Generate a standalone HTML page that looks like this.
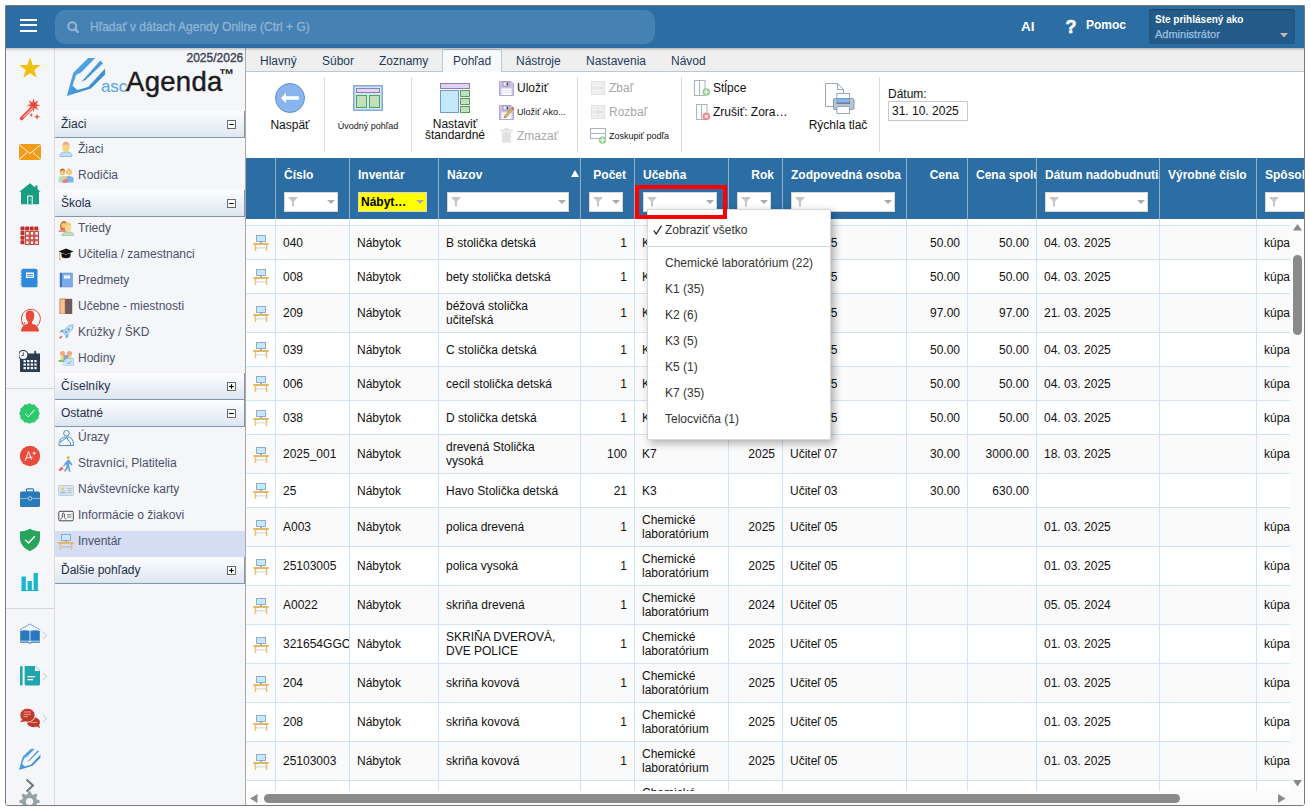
<!DOCTYPE html><html><head><meta charset="utf-8"><style>
*{box-sizing:border-box;margin:0;padding:0}
html,body{width:1310px;height:811px;overflow:hidden;background:#fff;font-family:"Liberation Sans",sans-serif;font-size:12px;color:#000}
.abs{position:absolute}
.frame{position:absolute;left:5px;top:5px;width:1300px;height:801px;border:1px solid #7a7a7a;overflow:hidden;background:#fff;border-radius:0 0 3px 3px}
.t{position:absolute;white-space:nowrap;line-height:14px}
</style></head><body>
<div class="frame">

<div class="abs" style="left:0px;top:0px;width:1298px;height:42px;background:#2c6da3"></div>
<div class="abs" style="left:14px;top:13px;width:17px;height:2px;background:#fff"></div>
<div class="abs" style="left:14px;top:18.4px;width:17px;height:2px;background:#fff"></div>
<div class="abs" style="left:14px;top:23.8px;width:17px;height:2px;background:#fff"></div>
<div class="abs" style="left:49px;top:4px;width:600px;height:34px;background:#4581b2;border-radius:10px"></div>
<svg class="abs" style="left:60px;top:14px" width="14" height="14" viewBox="0 0 14 14"><circle cx="6.2" cy="6.2" r="3.9" fill="none" stroke="#8fb4d5" stroke-width="2.1"/><path d="M9 9L11.8 11.8" stroke="#8fb4d5" stroke-width="2.5" stroke-linecap="round"/></svg>
<div class="t" style="left:84px;top:14px;color:#8eb3d4;font-size:12px;-webkit-text-stroke:0.35px #8eb3d4">Hľadať v dátach Agendy Online (Ctrl + G)</div>
<div class="t" style="left:1015px;top:13.5px;color:#fff;font-weight:bold;font-size:13.5px">AI</div>
<div class="t" style="left:1059.5px;top:13.5px;color:#fff;font-weight:bold;font-size:18px;-webkit-text-stroke:0.6px #fff">?</div>
<div class="t" style="left:1080px;top:12px;color:#fff;font-weight:bold;font-size:12px">Pomoc</div>
<div class="abs" style="left:1143px;top:3px;width:146px;height:35px;background:#245a88;border-radius:3px;box-shadow:inset 0 1px 1px rgba(0,0,0,0.25)"></div>
<div class="t" style="left:1149px;top:7px;color:#fff;font-weight:bold;font-size:10px">Ste prihlásený ako</div>
<div class="t" style="left:1149px;top:21px;color:#9cc0e4;font-size:11px;-webkit-text-stroke:0.25px #9cc0e4">Administrátor</div>
<svg class="abs" style="left:1274px;top:27px" width="8" height="5"><path d="M0 0h8L4 4.5z" fill="#c4beb8"/></svg>
<div class="abs" style="left:0px;top:42px;width:49px;height:757px;background:#f5f6f9;border-right:1px solid #dcdcdc"></div>
<div class="abs" style="left:0px;top:382px;width:48px;height:1px;background:#d6d6d6"></div>
<div class="abs" style="left:0px;top:602px;width:48px;height:1px;background:#d6d6d6"></div>
<div class="abs" style="left:49px;top:42px;width:191px;height:757px;background:#f5f6f9;border-right:1px solid #a8a8a8"></div>
<div class="t" style="left:180.5px;top:45px;color:#3d4556;font-size:12px;-webkit-text-stroke:0.4px #3d4556">2025/2026</div>
<div class="abs" style="left:49px;top:105px;width:190px;height:27px;background:linear-gradient(#fdfdfe,#dde6f1);border-bottom:1px solid #8595ac;border-right:1px solid #8a94a4"></div>
<div class="t" style="left:55px;top:111px;color:#1e2e4a;font-size:12px">Žiaci</div>
<svg class="abs" style="left:221px;top:114px" width="9" height="9" viewBox="0 0 9 9"><rect x="0.5" y="0.5" width="8" height="8" fill="#fff" stroke="#6a6a6a"/><path d="M2.2 4.5H6.8" stroke="#000" stroke-width="1.2"/></svg>
<div class="t" style="left:72px;top:136px;color:#4b5068;font-size:12px">Žiaci</div>
<div class="t" style="left:72px;top:162px;color:#4b5068;font-size:12px">Rodičia</div>
<div class="abs" style="left:49px;top:184px;width:190px;height:27px;background:linear-gradient(#fdfdfe,#dde6f1);border-bottom:1px solid #8595ac;border-right:1px solid #8a94a4"></div>
<div class="t" style="left:55px;top:190px;color:#1e2e4a;font-size:12px">Škola</div>
<svg class="abs" style="left:221px;top:193px" width="9" height="9" viewBox="0 0 9 9"><rect x="0.5" y="0.5" width="8" height="8" fill="#fff" stroke="#6a6a6a"/><path d="M2.2 4.5H6.8" stroke="#000" stroke-width="1.2"/></svg>
<div class="t" style="left:72px;top:215px;color:#4b5068;font-size:12px">Triedy</div>
<div class="t" style="left:72px;top:241px;color:#4b5068;font-size:12px">Učitelia / zamestnanci</div>
<div class="t" style="left:72px;top:267px;color:#4b5068;font-size:12px">Predmety</div>
<div class="t" style="left:72px;top:293px;color:#4b5068;font-size:12px">Učebne - miestnosti</div>
<div class="t" style="left:72px;top:319px;color:#4b5068;font-size:12px">Krúžky / ŠKD</div>
<div class="t" style="left:72px;top:345px;color:#4b5068;font-size:12px">Hodiny</div>
<div class="abs" style="left:49px;top:367px;width:190px;height:27px;background:linear-gradient(#fdfdfe,#dde6f1);border-bottom:1px solid #8595ac;border-right:1px solid #8a94a4"></div>
<div class="t" style="left:55px;top:373px;color:#1e2e4a;font-size:12px">Číselníky</div>
<svg class="abs" style="left:221px;top:376px" width="9" height="9" viewBox="0 0 9 9"><rect x="0.5" y="0.5" width="8" height="8" fill="#fff" stroke="#6a6a6a"/><path d="M2.2 4.5H6.8" stroke="#000" stroke-width="1.2"/><path d="M4.5 2.2V6.8" stroke="#000" stroke-width="1.2"/></svg>
<div class="abs" style="left:49px;top:394px;width:190px;height:27px;background:linear-gradient(#fdfdfe,#dde6f1);border-bottom:1px solid #8595ac;border-right:1px solid #8a94a4"></div>
<div class="t" style="left:55px;top:400px;color:#1e2e4a;font-size:12px">Ostatné</div>
<svg class="abs" style="left:221px;top:403px" width="9" height="9" viewBox="0 0 9 9"><rect x="0.5" y="0.5" width="8" height="8" fill="#fff" stroke="#6a6a6a"/><path d="M2.2 4.5H6.8" stroke="#000" stroke-width="1.2"/></svg>
<div class="t" style="left:72px;top:424px;color:#4b5068;font-size:12px">Úrazy</div>
<div class="t" style="left:72px;top:450px;color:#4b5068;font-size:12px">Stravníci, Platitelia</div>
<div class="t" style="left:72px;top:476px;color:#4b5068;font-size:12px">Návštevnícke karty</div>
<div class="t" style="left:72px;top:502px;color:#4b5068;font-size:12px">Informácie o žiakovi</div>
<div class="abs" style="left:49px;top:525px;width:190px;height:26px;background:#d5ddf4"></div>
<div class="t" style="left:72px;top:528px;color:#4b5068;font-size:12px">Inventár</div>
<div class="abs" style="left:49px;top:551px;width:190px;height:27px;background:linear-gradient(#fdfdfe,#dde6f1);border-bottom:1px solid #8595ac;border-right:1px solid #8a94a4"></div>
<div class="t" style="left:55px;top:557px;color:#1e2e4a;font-size:12px">Ďalšie pohľady</div>
<svg class="abs" style="left:221px;top:560px" width="9" height="9" viewBox="0 0 9 9"><rect x="0.5" y="0.5" width="8" height="8" fill="#fff" stroke="#6a6a6a"/><path d="M2.2 4.5H6.8" stroke="#000" stroke-width="1.2"/><path d="M4.5 2.2V6.8" stroke="#000" stroke-width="1.2"/></svg>
<svg class="abs" style="left:12px;top:50px" width="24" height="24" viewBox="0 0 24 24"><path d="M12.00,1.30L14.70,8.88L22.75,9.11L16.37,14.02L18.64,21.74L12.00,17.20L5.36,21.74L7.63,14.02L1.25,9.11L9.30,8.88Z" fill="#f2c011"/></svg>
<svg class="abs" style="left:12px;top:90px" width="24" height="26" viewBox="0 0 24 26"><path d="M3.5 22.5L15.5 10.5" stroke="#e64a3b" stroke-width="3.2" stroke-linecap="round"/><path d="M22.50,9.30L18.27,10.45L20.45,14.25L16.65,12.07L15.50,16.30L14.35,12.07L10.55,14.25L12.73,10.45L8.50,9.30L12.73,8.15L10.55,4.35L14.35,6.53L15.50,2.30L16.65,6.53L20.45,4.35L18.27,8.15Z" fill="#e64a3b"/><path d="M15 11.5L5 21.5" stroke="#fff" stroke-width="0.9"/><path d="M15.50,19.00L13.87,19.57L13.30,21.20L12.73,19.57L11.10,19.00L12.73,18.43L13.30,16.80L13.87,18.43Z" fill="#e64a3b"/><path d="M22.20,20.80L19.78,21.58L19.00,24.00L18.22,21.58L15.80,20.80L18.22,20.02L19.00,17.60L19.78,20.02Z" fill="#e64a3b"/></svg>
<svg class="abs" style="left:12px;top:137px" width="24" height="18" viewBox="0 0 24 18"><rect x="1" y="1" width="22" height="16" fill="#f39c1a"/><path d="M1 1.5L12 10.5L23 1.5M1 16.5L9 9.5M23 16.5L15 9.5" fill="none" stroke="#fff" stroke-width="0.9"/></svg>
<svg class="abs" style="left:12px;top:176px" width="24" height="24" viewBox="0 0 24 24"><path d="M12 1.3L1.3 9.8H3V22.3H21V9.8H22.7L19.5 7.2V3.5H17.2V5.4Z" fill="#1a9e82"/><rect x="9.3" y="13.5" width="5.4" height="8.8" fill="#fff"/><rect x="10.3" y="14.5" width="3.4" height="7.8" fill="#1a9e82"/><rect x="12.3" y="17.6" width="0.8" height="0.8" fill="#fff"/></svg>
<svg class="abs" style="left:14px;top:220px" width="20" height="20" viewBox="0 0 20 20"><rect x="0.5" y="0.5" width="4" height="4" rx="0.6" fill="#c0302a"/><rect x="5.1" y="0.5" width="4" height="4" rx="0.6" fill="#c0302a"/><rect x="9.7" y="0.5" width="4" height="4" rx="0.6" fill="#c0302a"/><rect x="14.299999999999999" y="0.5" width="4" height="4" rx="0.6" fill="#c0302a"/><rect x="0.5" y="5.1" width="4" height="4" rx="0.6" fill="#c0302a"/><rect x="5.1" y="5.1" width="4.6" height="4.6" fill="#c0302a"/><rect x="6.1" y="6.1" width="2.6" height="2.6" fill="#fff"/><rect x="9.7" y="5.1" width="4.6" height="4.6" fill="#c0302a"/><rect x="10.7" y="6.1" width="2.6" height="2.6" fill="#fff"/><rect x="14.299999999999999" y="5.1" width="4.6" height="4.6" fill="#c0302a"/><rect x="15.299999999999999" y="6.1" width="2.6" height="2.6" fill="#fff"/><rect x="0.5" y="9.7" width="4" height="4" rx="0.6" fill="#c0302a"/><rect x="5.1" y="9.7" width="4.6" height="4.6" fill="#c0302a"/><rect x="6.1" y="10.7" width="2.6" height="2.6" fill="#fff"/><rect x="9.7" y="9.7" width="4.6" height="4.6" fill="#c0302a"/><rect x="10.7" y="10.7" width="2.6" height="2.6" fill="#fff"/><rect x="14.299999999999999" y="9.7" width="4.6" height="4.6" fill="#c0302a"/><rect x="15.299999999999999" y="10.7" width="2.6" height="2.6" fill="#fff"/><rect x="0.5" y="14.299999999999999" width="4" height="4" rx="0.6" fill="#c0302a"/><rect x="5.1" y="14.299999999999999" width="4.6" height="4.6" fill="#c0302a"/><rect x="6.1" y="15.299999999999999" width="2.6" height="2.6" fill="#fff"/><rect x="9.7" y="14.299999999999999" width="4.6" height="4.6" fill="#c0302a"/><rect x="10.7" y="15.299999999999999" width="2.6" height="2.6" fill="#fff"/><rect x="14.299999999999999" y="14.299999999999999" width="4.6" height="4.6" fill="#c0302a"/><rect x="15.299999999999999" y="15.299999999999999" width="2.6" height="2.6" fill="#fff"/></svg>
<svg class="abs" style="left:14px;top:262px" width="18" height="20" viewBox="0 0 18 20"><rect x="1.5" y="0.7" width="16" height="18.6" rx="1.6" fill="#2e8ad8"/><rect x="6" y="4.5" width="8" height="5.5" fill="#fff"/><rect x="7" y="6" width="6" height="0.9" fill="#2e8ad8"/><rect x="7" y="7.8" width="6" height="0.9" fill="#2e8ad8"/><path d="M0.5 4H2.5M0.5 7H2.5M0.5 10H2.5M0.5 13H2.5M0.5 16H2.5" stroke="#2e8ad8" stroke-width="1"/></svg>
<svg class="abs" style="left:13px;top:302px" width="22" height="24" viewBox="0 0 22 24"><path d="M11 2.5C7.5 2.5 6.5 5.5 6.8 8.5C7 11 8 13 9 14V15.5C6 16.5 2.5 18 2 23.5H20C19.5 18 16 16.5 13 15.5V14C14 13 15 11 15.2 8.5C15.5 5.5 14.5 2.5 11 2.5Z" fill="#e64a3b"/><path d="M4 16A9.5 9.5 0 1 1 18 18" fill="none" stroke="#e64a3b" stroke-width="1"/><path d="M2 14.5L4.5 17.5L6 14" fill="none" stroke="#e64a3b" stroke-width="1"/></svg>
<svg class="abs" style="left:13px;top:344px" width="22" height="22" viewBox="0 0 22 22"><rect x="1" y="3.5" width="20" height="18.5" fill="#2b3c50"/><rect x="15.3" y="0.8" width="1.8" height="4.5" fill="#2b3c50"/><rect x="9" y="5" width="12" height="2" fill="#2b3c50" stroke="#f5f6f9" stroke-width="0"/><g fill="#fff"><rect x="4.5" y="10.0" width="2.3" height="2.2"/><rect x="8.1" y="10.0" width="2.3" height="2.2"/><rect x="11.7" y="10.0" width="2.3" height="2.2"/><rect x="15.3" y="10.0" width="2.3" height="2.2"/><rect x="4.5" y="13.5" width="2.3" height="2.2"/><rect x="8.1" y="13.5" width="2.3" height="2.2"/><rect x="11.7" y="13.5" width="2.3" height="2.2"/><rect x="15.3" y="13.5" width="2.3" height="2.2"/><rect x="4.5" y="17.0" width="2.3" height="2.2"/><rect x="8.1" y="17.0" width="2.3" height="2.2"/><rect x="11.7" y="17.0" width="2.3" height="2.2"/><rect x="15.3" y="17.0" width="2.3" height="2.2"/></g><circle cx="4.3" cy="5" r="4.6" fill="#f5f6f9" stroke="#2b3c50" stroke-width="1.1"/><path d="M4.3 2.4V5.5H2.6" fill="none" stroke="#2b3c50" stroke-width="0.9"/></svg>
<svg class="abs" style="left:13px;top:397px" width="22" height="22" viewBox="0 0 22 22"><path d="M20.80,10.50L19.58,12.93L19.42,15.65L17.15,17.15L15.65,19.42L12.93,19.58L10.50,20.80L8.07,19.58L5.35,19.42L3.85,17.15L1.58,15.65L1.42,12.93L0.20,10.50L1.42,8.07L1.58,5.35L3.85,3.85L5.35,1.58L8.07,1.42L10.50,0.20L12.93,1.42L15.65,1.58L17.15,3.85L19.42,5.35L19.58,8.07Z" fill="#2dca6c"/><path d="M6.2 11L9.4 13.8L15.5 6.8" fill="none" stroke="#fff" stroke-width="1"/></svg>
<svg class="abs" style="left:13px;top:439px" width="22" height="22" viewBox="0 0 22 22"><circle cx="11" cy="11" r="10.2" fill="#e74c3c"/><path d="M6 16L9.5 6.5L12.5 14.5M6.8 13.5Q9.5 11.8 13.5 12.2M13.6 8.2H16.8M15.2 6.6V9.8" fill="none" stroke="#fff" stroke-width="0.9"/></svg>
<svg class="abs" style="left:13px;top:482px" width="22" height="20" viewBox="0 0 22 20"><rect x="1" y="3.5" width="20" height="15.5" rx="1.5" fill="#2a7ab8"/><rect x="7.5" y="0.8" width="7" height="3.2" rx="1" fill="none" stroke="#2a7ab8" stroke-width="1.2"/><rect x="1" y="10" width="20" height="1" fill="#8ab8dc"/><circle cx="11" cy="10.5" r="1.8" fill="#2a7ab8" stroke="#b8d4ec" stroke-width="0.9"/></svg>
<svg class="abs" style="left:13px;top:522px" width="22" height="24" viewBox="0 0 22 24"><path d="M11 0.8C7.5 2.8 4.5 3.3 1 3.3V10C1 16 5 20.5 11 23.2C17 20.5 21 16 21 10V3.3C17.5 3.3 14.5 2.8 11 0.8Z" fill="#27a55a"/><path d="M6.2 11.8L9.5 15L15.8 8.2" fill="none" stroke="#fff" stroke-width="1.3"/></svg>
<svg class="abs" style="left:14px;top:566px" width="20" height="20" viewBox="0 0 20 20"><rect x="1.5" y="4.5" width="4.3" height="13.5" fill="#19b6cf"/><rect x="7.6" y="9" width="4.3" height="9" fill="#19b6cf"/><rect x="13.6" y="1" width="4.3" height="17" fill="#19b6cf"/><rect x="1" y="18" width="17.5" height="1" fill="#19b6cf"/></svg>
<svg class="abs" style="left:13px;top:617px" width="23" height="22" viewBox="0 0 23 22"><path d="M0.8 6.8L11 1L21.3 6.8" fill="none" stroke="#2a78be" stroke-width="0.9" stroke-dasharray="1.3 0.6"/><path d="M1.2 7.8Q6 6.6 10.6 7.8V17.8H1.2Z" fill="#2a78be"/><path d="M11.4 7.8Q16 6.6 20.8 7.8V17.8H11.4Z" fill="#2a78be"/><rect x="10.6" y="7.8" width="0.8" height="10.5" fill="#8ab8e0"/><path d="M1 18.6H9.5L11 20L12.5 18.6H21V19.8H12.5L11 21L9.5 19.8H1Z" fill="#2a78be"/></svg>
<svg class="abs" style="left:13px;top:659px" width="22" height="22" viewBox="0 0 22 22"><rect x="1" y="1" width="2.6" height="19.5" rx="1.3" fill="#22a6ae"/><path d="M5.6 1H16L21 6V19C21 19.8 20.3 20.5 19.5 20.5H7C6.2 20.5 5.6 19.8 5.6 19Z" fill="#22a6ae"/><path d="M16 1.5V6H20.5Z" fill="#fff"/><rect x="8.5" y="11" width="7.5" height="1.3" fill="#fff"/><rect x="8.5" y="14" width="5.5" height="1.3" fill="#fff"/></svg>
<svg class="abs" style="left:13px;top:701px" width="23" height="23" viewBox="0 0 23 23"><ellipse cx="14.5" cy="15.3" rx="6.5" ry="5" fill="#c0392b"/><path d="M17 19L21.2 21.2L19.5 17Z" fill="#c0392b"/><path d="M12 15.5H18" stroke="#e89088" stroke-width="1"/><ellipse cx="8.5" cy="8.2" rx="7.6" ry="7" fill="#c0392b" stroke="#f5f6f9" stroke-width="0.9"/><path d="M3.5 12.5L0.8 15.2L6.5 14.2Z" fill="#c0392b"/><path d="M4.5 5H12M4.5 7.4H12M4.5 9.6H9" stroke="#f0a098" stroke-width="1"/></svg>
<svg class="abs" style="left:36px;top:625px" width="6" height="9" viewBox="0 0 6 9"><path d="M0.8 0.8L4.6 4.5L0.8 8.2" fill="none" stroke="#d4d4d4" stroke-width="1.1"/></svg>
<svg class="abs" style="left:36px;top:666px" width="6" height="9" viewBox="0 0 6 9"><path d="M0.8 0.8L4.6 4.5L0.8 8.2" fill="none" stroke="#d4d4d4" stroke-width="1.1"/></svg>
<svg class="abs" style="left:36px;top:708px" width="6" height="9" viewBox="0 0 6 9"><path d="M0.8 0.8L4.6 4.5L0.8 8.2" fill="none" stroke="#d4d4d4" stroke-width="1.1"/></svg>
<svg class="abs" style="left:10px;top:740px" width="26" height="26" viewBox="0 0 26 26"><defs><linearGradient id="lg2" x1="0" y1="0" x2="1" y2="1"><stop offset="0" stop-color="#62b4ea"/><stop offset="1" stop-color="#2a7fcc"/></linearGradient></defs><g transform="translate(0.3,0.4) scale(0.56)"><path d="M4.8 42L11.3 18.7L26.1 4H33.2L19.3 18.2L14.2 21L10.5 31.5L15.3 36L26.1 32.9L43.1 14.5V20.4L28.9 34.6Z" fill="url(#lg2)"/><path d="M19.3 27.7L38.6 6.8L40.6 9L23.5 25.5Z" fill="url(#lg2)"/></g></svg>
<svg class="abs" style="left:19px;top:772px" width="10" height="15" viewBox="0 0 10 15"><path d="M1.5 1.5L8 7.5L1.5 13.5" fill="none" stroke="#6b7682" stroke-width="2"/></svg>
<svg class="abs" style="left:13px;top:785px" width="22" height="21" viewBox="0 0 22 21"><path d="M20.65,9.50L20.65,11.50L17.68,12.68L17.11,14.04L18.38,16.97L16.97,18.39L14.03,17.12L12.67,17.68L11.50,20.65L9.50,20.65L8.32,17.68L6.96,17.11L4.03,18.38L2.61,16.97L3.88,14.03L3.32,12.67L0.35,11.50L0.35,9.50L3.32,8.32L3.89,6.96L2.62,4.03L4.03,2.61L6.97,3.88L8.33,3.32L9.50,0.35L11.50,0.35L12.68,3.32L14.04,3.89L16.97,2.62L18.39,4.03L17.12,6.97L17.68,8.33Z" fill="#94a3a4"/><circle cx="10.5" cy="10.5" r="3.6" fill="#f5f6f9"/></svg>
<svg class="abs" style="left:52px;top:135px" width="16" height="16" viewBox="0 0 16 16"><path d="M2 15.5C2 12 4 11 8 11S14 12 14 15.5Z" fill="#bde0f8" stroke="#8ab4d8" stroke-width="0.8"/><ellipse cx="8" cy="6.5" rx="3.5" ry="4.5" fill="#f4d67a"/><path d="M4.5 5.5C4.5 2 6 0.8 8 0.8S11.5 2 11.5 5.5C11 4 10 3.5 8 3.5S5 4 4.5 5.5Z" fill="#f0a585"/></svg>
<svg class="abs" style="left:52px;top:161px" width="16" height="16" viewBox="0 0 16 16"><path d="M0.5 15.5V11.5C0.5 10 2 9 5 9S9 10 9 11.5V15.5Z" fill="#b8e0b8"/><circle cx="4.5" cy="5.5" r="2.8" fill="#f2c878"/><path d="M1.8 5C1.8 2.5 3 1.5 4.5 1.5S7.2 2.5 7.2 5C6.5 3.8 5.5 3.5 4.5 3.5S2.5 3.8 1.8 5Z" fill="#b8703a"/><path d="M7 15.5V11.5C7 10 8.5 9 11 9S15.5 10 15.5 11.5V15.5Z" fill="#80b4ec"/><circle cx="11" cy="5.5" r="2.8" fill="#f2d08a"/><path d="M8 6C8 2.5 9.5 1.5 11 1.5S14 2.5 14 6L13.5 8C13 5 12 3.8 11 3.8S9 5 8.5 8Z" fill="#f0c870"/><path d="M4.5 15.8V13.8C4.5 13 5.5 12.5 7 12.5S9.5 13 9.5 13.8V15.8Z" fill="#ec7880"/><circle cx="7" cy="10.8" r="1.7" fill="#f2c878"/></svg>
<svg class="abs" style="left:52px;top:214px" width="16" height="16" viewBox="0 0 16 16"><path d="M0.5 12C0.5 10.5 2 9.5 5 9.5S9 10.5 9 12Z" fill="#ec8c98"/><path d="M2 8C2 3 3.5 1 6 1S9 3 9 6L7 10H3Z" fill="#d07a38"/><circle cx="5.8" cy="5.5" r="2.5" fill="#f4c878"/><path d="M4 16C4 13 6 12 10 12S16 13 16 16Z" fill="#bfe2bd" stroke="#8cc08a" stroke-width="0.6"/><ellipse cx="10" cy="8" rx="3.2" ry="3.8" fill="#f8d890"/><path d="M6.8 7C6.8 3.5 8 2.5 10 2.5S13.2 3.5 13.2 7C12.5 5.5 11.5 5 10 5S7.5 5.5 6.8 7Z" fill="#f0c870"/></svg>
<svg class="abs" style="left:52px;top:240px" width="16" height="16" viewBox="0 0 16 16"><path d="M0.5 5.5L8 2.5L15.5 5.5L8 8.5Z" fill="#111"/><path d="M3.5 7V10C3.5 11.5 5.5 12.2 8 12.2S12.5 11.5 12.5 10V7L8 8.8Z" fill="#111"/><path d="M1.8 6V12.5" stroke="#d8a068" stroke-width="0.9"/><rect x="1.2" y="12" width="1.3" height="2.5" fill="#e8a878"/></svg>
<svg class="abs" style="left:52px;top:266px" width="16" height="16" viewBox="0 0 16 16"><rect x="2" y="1" width="12.5" height="14" fill="#7aaae8" stroke="#5a8ad0" stroke-width="0.5"/><rect x="2" y="1" width="2" height="14" fill="#3a70c0"/><rect x="6" y="3.5" width="6" height="3" fill="#fff"/><rect x="7" y="4.5" width="4" height="1" fill="#dde"/></svg>
<svg class="abs" style="left:52px;top:292px" width="16" height="16" viewBox="0 0 16 16"><rect x="2" y="1" width="12" height="15" fill="#5a4a50" stroke="#b07850" stroke-width="0.6"/><rect x="7.5" y="1.5" width="6" height="14" fill="#6e5c62"/><path d="M2 1.3L7 0.8V16H2Z" fill="#f8c090" stroke="#c08050" stroke-width="0.6"/></svg>
<svg class="abs" style="left:52px;top:318px" width="16" height="16" viewBox="0 0 16 16"><path d="M15 0.8L11 1.5L4.5 8L8 11.5L14.5 5Z" fill="#c0e4fa" stroke="#6fa0d8" stroke-width="0.7"/><path d="M4.5 8L1.5 8.5L3 6L6 5.5Z" fill="#6fa0d8"/><path d="M8 11.5L7.5 14.5L10 13L10.5 10Z" fill="#6fa0d8"/><circle cx="10.5" cy="5.5" r="1.2" fill="#6fa0d8"/><circle cx="8" cy="8" r="1.2" fill="#6fa0d8"/><path d="M1 14L3.5 11.5L4.5 12.5L2 15Z" fill="#ec5858"/></svg>
<svg class="abs" style="left:52px;top:344px" width="16" height="16" viewBox="0 0 16 16"><circle cx="4.5" cy="3.5" r="2.5" fill="#f0a878"/><circle cx="11.5" cy="3.5" r="2.5" fill="#f0a878"/><path d="M2.5 5.5H6.5V11H2.5Z" fill="#f4d67a"/><path d="M9.5 5.5H13.5V11H9.5Z" fill="#f4d67a"/><rect x="5.5" y="5" width="5" height="5" fill="#8aa8c8"/><rect x="0.5" y="10" width="6" height="2" fill="#80c080"/><rect x="7.5" y="8.5" width="8" height="7.5" fill="#c6e6fa" stroke="#90b8e0" stroke-width="0.5"/><path d="M9.5 12.5L11 13.8L13.5 11" fill="none" stroke="#5a8ad0" stroke-width="0.7"/><rect x="4" y="12.5" width="4" height="3" fill="#c6e6fa"/></svg>
<svg class="abs" style="left:52px;top:424px" width="16" height="16" viewBox="0 0 16 16"><circle cx="8.5" cy="3.2" r="2.8" fill="none" stroke="#4a8ec8" stroke-width="1"/><path d="M1 15.5C1 9.5 3.5 7 8.5 7S15.5 9.5 15.5 15.5Z" fill="none" stroke="#4a8ec8" stroke-width="1"/><path d="M2 12L9 7.5L10 10L12.5 12.5V15.5" fill="none" stroke="#4a8ec8" stroke-width="1"/><path d="M1.5 13.5L4 11" stroke="#9ac0e0" stroke-width="1.5"/></svg>
<svg class="abs" style="left:52px;top:450px" width="16" height="16" viewBox="0 0 16 16"><circle cx="10.3" cy="1.8" r="1.6" fill="#e8b050"/><path d="M9.5 4L6.5 7.5L5 10L6 10.5L8 8L8.5 11L6 15L7.5 15.8L10 12L11 15.8H12.5L11.5 11L11 7.5L13.5 9.5L14.5 8.5L11.5 4Z" fill="#6aa0e0"/><path d="M0.5 13.5L4 10.5L5.5 12.5L2 15.5Z" fill="#ec6a78"/></svg>
<svg class="abs" style="left:52px;top:476px" width="16" height="16" viewBox="0 0 16 16"><rect x="0.5" y="3.5" width="15" height="10" rx="1" fill="#d8e4f0" stroke="#b8c8d8" stroke-width="0.8"/><circle cx="4.8" cy="6.8" r="1.5" fill="#f2c848"/><path d="M2 11.5C2 9.8 3.2 9.2 4.8 9.2S7.6 9.8 7.6 11.5Z" fill="#90c4f0"/><path d="M9.5 6.5H13.5M9.5 8.5H13.5M9.5 10.5H13.5" stroke="#b0bcc8" stroke-width="0.9"/></svg>
<svg class="abs" style="left:52px;top:502px" width="16" height="16" viewBox="0 0 16 16"><rect x="0.8" y="3.3" width="14.5" height="9.5" rx="1.2" fill="#fff" stroke="#444" stroke-width="1"/><path d="M2.5 11.5C3 10 4 9.8 4.3 9.5V6.2C4.3 5.5 4.8 5 5.3 5S6.3 5.5 6.3 6.2V9.5C6.6 9.8 7.6 10 8 11.5" fill="none" stroke="#333" stroke-width="0.9"/><path d="M9 6.8H13.5M9 9H13.5" stroke="#666" stroke-width="1"/></svg>
<svg class="abs" style="left:52px;top:528px" width="16" height="16" viewBox="0 0 16 16"><rect x="3.5" y="0.5" width="9" height="6" fill="#c4e8fc" stroke="#94abc2" stroke-width="1"/><rect x="7" y="6.5" width="2" height="1.5" fill="#94abc2"/><rect x="0.3" y="8" width="15.4" height="2" rx="0.5" fill="#e2b866"/><rect x="1.7" y="10" width="1.5" height="6" fill="#ebc274"/><rect x="12.8" y="10" width="1.5" height="6" fill="#ebc274"/><rect x="3.2" y="12" width="9.6" height="1.6" fill="rgba(140,130,110,0.22)"/></svg>
<div class="abs" style="left:240px;top:42px;width:1058px;height:24px;background:#efefef;border-bottom:1px solid #b8c8da"></div>
<div class="abs" style="left:436px;top:43px;width:60px;height:23px;background:#f8f9fd;border:1px solid #b8c8da;border-bottom:none;border-radius:2px 2px 0 0"></div>
<div class="t" style="left:254px;top:48px;color:#1e3a5c;font-size:12px">Hlavný</div>
<div class="t" style="left:316px;top:48px;color:#1e3a5c;font-size:12px">Súbor</div>
<div class="t" style="left:373px;top:48px;color:#1e3a5c;font-size:12px">Zoznamy</div>
<div class="t" style="left:447px;top:48px;color:#1e3a5c;font-size:12px">Pohľad</div>
<div class="t" style="left:510px;top:48px;color:#1e3a5c;font-size:12px">Nástroje</div>
<div class="t" style="left:580px;top:48px;color:#1e3a5c;font-size:12px">Nastavenia</div>
<div class="t" style="left:665px;top:48px;color:#1e3a5c;font-size:12px">Návod</div>
<div class="abs" style="left:0px;top:42px;width:1298px;height:3px;background:linear-gradient(rgba(0,0,0,0.22),rgba(0,0,0,0))"></div>
<div class="abs" style="left:240px;top:66px;width:1058px;height:86px;background:#fff"></div>
<div class="abs" style="left:318px;top:71px;width:1px;height:75px;background:#dcdcdc"></div>
<div class="abs" style="left:405px;top:71px;width:1px;height:75px;background:#dcdcdc"></div>
<div class="abs" style="left:571px;top:71px;width:1px;height:75px;background:#dcdcdc"></div>
<div class="abs" style="left:675px;top:71px;width:1px;height:75px;background:#dcdcdc"></div>
<div class="abs" style="left:873px;top:71px;width:1px;height:75px;background:#dcdcdc"></div>
<svg class="abs" style="left:269px;top:77px" width="30" height="30" viewBox="0 0 30 30"><circle cx="15" cy="15" r="14.5" fill="#8ab4ee" stroke="#5f8ccc" stroke-width="1"/><path d="M6 15L11 9.8V13.3H23.8V16.8H11V20.2Z" fill="#fff"/></svg>
<div class="t" style="left:184px;width:200px;text-align:center;top:112px;color:#111">Naspäť</div>
<svg class="abs" style="left:347px;top:79px" width="30" height="26" viewBox="0 0 30 26"><rect x="0.75" y="0.75" width="28.5" height="24.5" fill="#c8ecfc" stroke="#88a8d8" stroke-width="1.5"/><rect x="3.5" y="3.5" width="23" height="4" fill="#e0d8f6" stroke="#9a78a8" stroke-width="1"/><rect x="3.5" y="10.5" width="10" height="12" fill="#bfe0bc" stroke="#5c9c5c" stroke-width="1"/><rect x="16.5" y="10.5" width="10" height="12" fill="#bfe0bc" stroke="#5c9c5c" stroke-width="1"/></svg>
<div class="t" style="left:262px;width:200px;text-align:center;top:113px;color:#111;font-size:9px">Úvodný pohľad</div>
<svg class="abs" style="left:434px;top:77px" width="30" height="30" viewBox="0 0 30 30"><rect x="0.5" y="0.5" width="29" height="5" fill="#dcd4f4" stroke="#9a78a8" stroke-width="1"/><rect x="0.5" y="7.5" width="18" height="22" fill="#c6e8fc" stroke="#6f9bd0" stroke-width="1"/><rect x="20.5" y="7.5" width="9" height="6" fill="#bfe0bc" stroke="#5c9c5c" stroke-width="1"/><rect x="20.5" y="15.5" width="9" height="6" fill="#bfe0bc" stroke="#5c9c5c" stroke-width="1"/><rect x="20.5" y="23.5" width="9" height="6" fill="#bfe0bc" stroke="#5c9c5c" stroke-width="1"/></svg>
<div class="t" style="left:399px;width:100px;text-align:center;top:113px;line-height:11px;color:#111">Nastaviť<br>štandardné</div>
<svg class="abs" style="left:493px;top:75px" width="15" height="15" viewBox="0 0 15 15"><path d="M0.5 0.5H12L14.5 3V14.5H0.5Z" fill="#cdbfe8" stroke="#b5a5d8" stroke-width="1"/><rect x="4" y="1" width="6" height="4" fill="#f0f0f4" stroke="#8890a0" stroke-width="0.8"/><rect x="7.5" y="1.8" width="1.5" height="2.5" fill="#444"/><rect x="2.5" y="7.5" width="10" height="6.5" fill="#fff"/><path d="M3.5 9.5H11.5M3.5 11.5H11.5" stroke="#cfe0f0" stroke-width="0.8"/></svg>
<div class="t" style="left:511px;top:75px;color:#111">Uložiť</div>
<svg class="abs" style="left:493px;top:99px" width="15" height="15" viewBox="0 0 15 15"><path d="M0.5 0.5H12L14.5 3V14.5H0.5Z" fill="#cdbfe8" stroke="#b5a5d8" stroke-width="1"/><rect x="4" y="1" width="6" height="4" fill="#f0f0f4" stroke="#8890a0" stroke-width="0.8"/><rect x="7.5" y="1.8" width="1.5" height="2.5" fill="#444"/><rect x="2.5" y="7.5" width="10" height="6.5" fill="#fff"/><path d="M3.5 9.5H11.5M3.5 11.5H11.5" stroke="#cfe0f0" stroke-width="0.8"/><path d="M5 13L6 10.5L12.5 3L14 4.5L7.5 12Z" fill="#e8c060" stroke="#8a6a30" stroke-width="0.6"/><path d="M12.5 3L14 4.5L15 3.5L13.5 2Z" fill="#e05050"/></svg>
<div class="t" style="left:511px;top:99px;color:#111;font-size:9px">Uložiť Ako...</div>
<svg class="abs" style="left:494px;top:122px" width="13" height="15" viewBox="0 0 13 15"><rect x="0" y="1.5" width="13" height="2" fill="#e2e2e2"/><rect x="4.5" y="0" width="4" height="2" fill="#e2e2e2"/><path d="M1.5 4H11.5L10.8 15H2.2Z" fill="#e8e8e8"/><path d="M4 5V14M6.5 5V14M9 5V14" stroke="#d0d0d0" stroke-width="0.8"/></svg>
<div class="t" style="left:511px;top:123px;color:#a8a8a8">Zmazať</div>
<svg class="abs" style="left:585px;top:75px" width="14" height="14" viewBox="0 0 14 14"><rect x="0.5" y="0.5" width="13" height="13" fill="#efefef" stroke="#e2e2e2"/><rect x="2.5" y="6.5" width="9" height="1" fill="#dadada"/></svg>
<div class="t" style="left:603px;top:75px;color:#a8a8a8">Zbaľ</div>
<svg class="abs" style="left:585px;top:99px" width="14" height="14" viewBox="0 0 14 14"><rect x="0.5" y="0.5" width="13" height="13" fill="#efefef" stroke="#e2e2e2"/><rect x="2.5" y="6.5" width="9" height="1" fill="#dadada"/><rect x="6.5" y="2.5" width="1" height="9" fill="#dadada"/></svg>
<div class="t" style="left:603px;top:99px;color:#a8a8a8">Rozbaľ</div>
<svg class="abs" style="left:584px;top:122px" width="17" height="16" viewBox="0 0 17 16"><rect x="0.5" y="0.5" width="15" height="10" fill="#fff" stroke="#a8b4c4"/><path d="M0.5 5.5H15.5" stroke="#a8b4c4"/><circle cx="12.5" cy="12.2" r="3.6" fill="#94cf94"/><path d="M12.5 10V14.4M10.3 12.2H14.7" stroke="#fff" stroke-width="1.2"/></svg>
<div class="t" style="left:603px;top:123px;color:#111;font-size:9px">Zoskupiť podľa</div>
<svg class="abs" style="left:688px;top:74px" width="17" height="17" viewBox="0 0 17 17"><rect x="0.5" y="0.5" width="10.5" height="15" fill="#fff" stroke="#a8b4c4"/><path d="M5.5 0.5V15.5" stroke="#a8b4c4"/><circle cx="12.3" cy="12" r="3.8" fill="#94cf94"/><path d="M12.3 9.8V14.2M10.1 12H14.5" stroke="#fff" stroke-width="1.2"/></svg>
<div class="t" style="left:707px;top:75px;color:#111">Stĺpce</div>
<svg class="abs" style="left:690px;top:98px" width="15" height="17" viewBox="0 0 15 17"><rect x="0.5" y="0.5" width="10.5" height="15" fill="#fff" stroke="#a8b4c4"/><path d="M5.5 0.5V15.5" stroke="#a8b4c4"/><circle cx="10.3" cy="12.4" r="3.8" fill="#ec8c8c"/><path d="M8.8 10.9L11.8 13.9M11.8 10.9L8.8 13.9" stroke="#fff" stroke-width="1.1"/></svg>
<div class="t" style="left:707px;top:99px;color:#111">Zrušiť: Zora…</div>
<svg class="abs" style="left:819px;top:77px" width="30" height="31" viewBox="0 0 30 31"><path d="M0.5 0.5H12.5L18.5 6.5V23.5H0.5Z" fill="#fff" stroke="#98a8b8"/><path d="M12.5 0.5V6.5H18.5" fill="none" stroke="#98a8b8"/><rect x="12" y="10.5" width="12.5" height="5" fill="#fff" stroke="#98a8b8"/><rect x="8.5" y="15.5" width="20.5" height="11" rx="1.5" fill="#b6c4d6" stroke="#8898aa"/><rect x="12" y="15.5" width="12.5" height="5" fill="#8ab4ee" stroke="#6a94d0" stroke-width="0.8"/><rect x="11.5" y="19.5" width="13.5" height="1.5" fill="#6d7d90"/><rect x="12" y="23.5" width="12.5" height="7" fill="#fff" stroke="#98a8b8"/><circle cx="26.5" cy="17.5" r="0.8" fill="#f0e080"/></svg>
<div class="t" style="left:732px;width:200px;text-align:center;top:112px;color:#111">Rýchla tlač</div>
<div class="t" style="left:882px;top:81px;color:#111">Dátum:</div>
<div class="abs" style="left:882px;top:95px;width:80px;height:20px;background:#fff;border:1px solid #c8c8c8"></div>
<div class="t" style="left:886px;top:98px;color:#111">31. 10. 2025</div>
<svg class="abs" style="left:56px;top:48px" width="46" height="46" viewBox="0 0 46 46"><defs><linearGradient id="lg" x1="0" y1="0" x2="1" y2="1"><stop offset="0" stop-color="#62b4ea"/><stop offset="1" stop-color="#2a7fcc"/></linearGradient></defs><path d="M4.8 42L11.3 18.7L26.1 4H33.2L19.3 18.2L14.2 21L10.5 31.5L15.3 36L26.1 32.9L43.1 14.5V20.4L28.9 34.6Z" fill="url(#lg)"/><path d="M19 28.2L38.3 6.5L41 9.3L23.8 25.8Z" fill="url(#lg)"/></svg>
<div class="t" style="left:95px;top:71px;line-height:20px;font-size:17px;color:#5aaae0;letter-spacing:-0.1px;-webkit-text-stroke:0.1px #5aaae0">asc</div>
<div class="t" style="left:120px;top:60px;line-height:32px;font-size:27.5px;color:#1c1c1c;-webkit-text-stroke:0.45px #1c1c1c;letter-spacing:0.3px">Agenda</div>
<div class="t" style="left:213px;top:62px;line-height:13px;font-size:15.5px;font-weight:bold;color:#1c1c1c">™</div>
<div class="abs" style="left:240px;top:152px;width:1058px;height:61px;background:#2c6da3"></div>
<div class="abs" style="left:269px;top:152px;width:1px;height:61px;background:#8fb0cc"></div>
<div class="abs" style="left:343px;top:152px;width:1px;height:61px;background:#8fb0cc"></div>
<div class="abs" style="left:432px;top:152px;width:1px;height:61px;background:#8fb0cc"></div>
<div class="abs" style="left:574px;top:152px;width:1px;height:61px;background:#8fb0cc"></div>
<div class="abs" style="left:628px;top:152px;width:1px;height:61px;background:#8fb0cc"></div>
<div class="abs" style="left:722px;top:152px;width:1px;height:61px;background:#8fb0cc"></div>
<div class="abs" style="left:776px;top:152px;width:1px;height:61px;background:#8fb0cc"></div>
<div class="abs" style="left:900px;top:152px;width:1px;height:61px;background:#8fb0cc"></div>
<div class="abs" style="left:961px;top:152px;width:1px;height:61px;background:#8fb0cc"></div>
<div class="abs" style="left:1030px;top:152px;width:1px;height:61px;background:#8fb0cc"></div>
<div class="abs" style="left:1153px;top:152px;width:1px;height:61px;background:#8fb0cc"></div>
<div class="abs" style="left:1250px;top:152px;width:1px;height:61px;background:#8fb0cc"></div>
<div class="t" style="left:278px;width:65px;overflow:hidden;top:162px;color:#fff;font-weight:bold">Číslo</div>
<div class="abs" style="left:278px;top:186px;width:54px;height:20px;background:#fff;border:1px solid #ddd6cf"></div>
<svg class="abs" style="left:282px;top:191px" width="10" height="10" viewBox="0 0 10 10"><path d="M0 0H10L6 4.5V10L4 9V4.5Z" fill="#c6c6c6"/></svg>
<svg class="abs" style="left:321px;top:194px" width="8" height="5"><path d="M0 0H8L4 4Z" fill="#ababab"/></svg>
<div class="t" style="left:352px;width:80px;overflow:hidden;top:162px;color:#fff;font-weight:bold">Inventár</div>
<div class="abs" style="left:352px;top:186px;width:69px;height:20px;background:#ffff00;border:1px solid #ddd6cf"></div>
<div class="t" style="left:355px;top:189px;font-weight:bold;color:#000">Nábyt…</div>
<svg class="abs" style="left:410px;top:194px" width="8" height="5"><path d="M0 0H8L4 4Z" fill="#ababab"/></svg>
<div class="t" style="left:441px;width:133px;overflow:hidden;top:162px;color:#fff;font-weight:bold">Názov</div>
<div class="abs" style="left:441px;top:186px;width:122px;height:20px;background:#fff;border:1px solid #ddd6cf"></div>
<svg class="abs" style="left:445px;top:191px" width="10" height="10" viewBox="0 0 10 10"><path d="M0 0H10L6 4.5V10L4 9V4.5Z" fill="#c6c6c6"/></svg>
<svg class="abs" style="left:552px;top:194px" width="8" height="5"><path d="M0 0H8L4 4Z" fill="#ababab"/></svg>
<div class="t" style="left:574px;width:46px;text-align:right;top:162px;color:#fff;font-weight:bold">Počet</div>
<div class="abs" style="left:583px;top:186px;width:34px;height:20px;background:#fff;border:1px solid #ddd6cf"></div>
<svg class="abs" style="left:587px;top:191px" width="10" height="10" viewBox="0 0 10 10"><path d="M0 0H10L6 4.5V10L4 9V4.5Z" fill="#c6c6c6"/></svg>
<svg class="abs" style="left:606px;top:194px" width="8" height="5"><path d="M0 0H8L4 4Z" fill="#ababab"/></svg>
<div class="t" style="left:637px;width:85px;overflow:hidden;top:162px;color:#fff;font-weight:bold">Učebňa</div>
<div class="abs" style="left:637px;top:186px;width:74px;height:20px;background:#fff;border:1px solid #ddd6cf"></div>
<svg class="abs" style="left:641px;top:191px" width="10" height="10" viewBox="0 0 10 10"><path d="M0 0H10L6 4.5V10L4 9V4.5Z" fill="#c6c6c6"/></svg>
<svg class="abs" style="left:700px;top:194px" width="8" height="5"><path d="M0 0H8L4 4Z" fill="#ababab"/></svg>
<div class="t" style="left:722px;width:46px;text-align:right;top:162px;color:#fff;font-weight:bold">Rok</div>
<div class="abs" style="left:731px;top:186px;width:34px;height:20px;background:#fff;border:1px solid #ddd6cf"></div>
<svg class="abs" style="left:735px;top:191px" width="10" height="10" viewBox="0 0 10 10"><path d="M0 0H10L6 4.5V10L4 9V4.5Z" fill="#c6c6c6"/></svg>
<svg class="abs" style="left:754px;top:194px" width="8" height="5"><path d="M0 0H8L4 4Z" fill="#ababab"/></svg>
<div class="t" style="left:785px;width:115px;overflow:hidden;top:162px;color:#fff;font-weight:bold">Zodpovedná osoba</div>
<div class="abs" style="left:785px;top:186px;width:104px;height:20px;background:#fff;border:1px solid #ddd6cf"></div>
<svg class="abs" style="left:789px;top:191px" width="10" height="10" viewBox="0 0 10 10"><path d="M0 0H10L6 4.5V10L4 9V4.5Z" fill="#c6c6c6"/></svg>
<svg class="abs" style="left:878px;top:194px" width="8" height="5"><path d="M0 0H8L4 4Z" fill="#ababab"/></svg>
<div class="t" style="left:900px;width:53px;text-align:right;top:162px;color:#fff;font-weight:bold">Cena</div>
<div class="t" style="left:970px;width:60px;overflow:hidden;top:162px;color:#fff;font-weight:bold">Cena spolu</div>
<div class="t" style="left:1039px;width:114px;overflow:hidden;top:162px;color:#fff;font-weight:bold">Dátum nadobudnutia</div>
<div class="abs" style="left:1039px;top:186px;width:103px;height:20px;background:#fff;border:1px solid #ddd6cf"></div>
<svg class="abs" style="left:1043px;top:191px" width="10" height="10" viewBox="0 0 10 10"><path d="M0 0H10L6 4.5V10L4 9V4.5Z" fill="#c6c6c6"/></svg>
<svg class="abs" style="left:1131px;top:194px" width="8" height="5"><path d="M0 0H8L4 4Z" fill="#ababab"/></svg>
<div class="t" style="left:1162px;width:88px;overflow:hidden;top:162px;color:#fff;font-weight:bold">Výrobné číslo</div>
<div class="t" style="left:1259px;width:39px;overflow:hidden;top:162px;color:#fff;font-weight:bold">Spôsob</div>
<div class="abs" style="left:1259px;top:186px;width:55px;height:20px;background:#fff;border:1px solid #ddd6cf"></div>
<svg class="abs" style="left:1263px;top:191px" width="10" height="10" viewBox="0 0 10 10"><path d="M0 0H10L6 4.5V10L4 9V4.5Z" fill="#c6c6c6"/></svg>
<svg class="abs" style="left:565px;top:164px" width="8" height="7"><path d="M0 7H8L4 0Z" fill="#fff"/></svg>
<div class="abs" style="left:240px;top:213px;width:1044px;height:572px;overflow:hidden;background:#fff">
<div class="abs" style="left:0px;top:6px;width:1044px;height:34px;background:#fafafa"></div>
<div class="abs" style="left:0px;top:6px;width:1044px;height:1px;background:#cbe4fa"></div>
<svg class="abs" style="left:7px;top:16px" width="16" height="16" viewBox="0 0 16 16"><rect x="3.5" y="0.5" width="9" height="6" fill="#c4e8fc" stroke="#94abc2" stroke-width="1"/><rect x="7" y="6.5" width="2" height="1.5" fill="#94abc2"/><rect x="0.3" y="8" width="15.4" height="2" rx="0.5" fill="#e2b866"/><rect x="1.7" y="10" width="1.5" height="6" fill="#ebc274"/><rect x="12.8" y="10" width="1.5" height="6" fill="#ebc274"/><rect x="3.2" y="12" width="9.6" height="1.6" fill="rgba(140,130,110,0.22)"/></svg>
<div class="t" style="left:37px;top:17px;width:66px;overflow:hidden;color:#111">040</div>
<div class="t" style="left:111px;top:17px;width:81px;overflow:hidden;color:#111">Nábytok</div>
<div class="t" style="left:200px;top:17px;width:134px;overflow:hidden;color:#111">B stolička detská</div>
<div class="t" style="left:334px;width:47px;text-align:right;top:17px;color:#111">1</div>
<div class="t" style="left:396px;top:17px;width:86px;overflow:hidden;color:#111">K1</div>
<div class="t" style="left:482px;width:47px;text-align:right;top:17px;color:#111">2025</div>
<div class="t" style="left:544px;top:17px;width:116px;overflow:hidden;color:#111">Učiteľ 05</div>
<div class="t" style="left:660px;width:54px;text-align:right;top:17px;color:#111">50.00</div>
<div class="t" style="left:721px;width:62px;text-align:right;top:17px;color:#111">50.00</div>
<div class="t" style="left:798px;top:17px;width:115px;overflow:hidden;color:#111">04. 03. 2025</div>
<div class="t" style="left:1018px;top:17px;width:136px;overflow:hidden;color:#111">kúpa</div>
<div class="abs" style="left:0px;top:40px;width:1044px;height:34px;background:#ffffff"></div>
<div class="abs" style="left:0px;top:40px;width:1044px;height:1px;background:#cbe4fa"></div>
<svg class="abs" style="left:7px;top:50px" width="16" height="16" viewBox="0 0 16 16"><rect x="3.5" y="0.5" width="9" height="6" fill="#c4e8fc" stroke="#94abc2" stroke-width="1"/><rect x="7" y="6.5" width="2" height="1.5" fill="#94abc2"/><rect x="0.3" y="8" width="15.4" height="2" rx="0.5" fill="#e2b866"/><rect x="1.7" y="10" width="1.5" height="6" fill="#ebc274"/><rect x="12.8" y="10" width="1.5" height="6" fill="#ebc274"/><rect x="3.2" y="12" width="9.6" height="1.6" fill="rgba(140,130,110,0.22)"/></svg>
<div class="t" style="left:37px;top:51px;width:66px;overflow:hidden;color:#111">008</div>
<div class="t" style="left:111px;top:51px;width:81px;overflow:hidden;color:#111">Nábytok</div>
<div class="t" style="left:200px;top:51px;width:134px;overflow:hidden;color:#111">bety stolička detská</div>
<div class="t" style="left:334px;width:47px;text-align:right;top:51px;color:#111">1</div>
<div class="t" style="left:396px;top:51px;width:86px;overflow:hidden;color:#111">K1</div>
<div class="t" style="left:482px;width:47px;text-align:right;top:51px;color:#111">2025</div>
<div class="t" style="left:544px;top:51px;width:116px;overflow:hidden;color:#111">Učiteľ 05</div>
<div class="t" style="left:660px;width:54px;text-align:right;top:51px;color:#111">50.00</div>
<div class="t" style="left:721px;width:62px;text-align:right;top:51px;color:#111">50.00</div>
<div class="t" style="left:798px;top:51px;width:115px;overflow:hidden;color:#111">04. 03. 2025</div>
<div class="t" style="left:1018px;top:51px;width:136px;overflow:hidden;color:#111">kúpa</div>
<div class="abs" style="left:0px;top:74px;width:1044px;height:39px;background:#fafafa"></div>
<div class="abs" style="left:0px;top:74px;width:1044px;height:1px;background:#cbe4fa"></div>
<svg class="abs" style="left:7px;top:87px" width="16" height="16" viewBox="0 0 16 16"><rect x="3.5" y="0.5" width="9" height="6" fill="#c4e8fc" stroke="#94abc2" stroke-width="1"/><rect x="7" y="6.5" width="2" height="1.5" fill="#94abc2"/><rect x="0.3" y="8" width="15.4" height="2" rx="0.5" fill="#e2b866"/><rect x="1.7" y="10" width="1.5" height="6" fill="#ebc274"/><rect x="12.8" y="10" width="1.5" height="6" fill="#ebc274"/><rect x="3.2" y="12" width="9.6" height="1.6" fill="rgba(140,130,110,0.22)"/></svg>
<div class="t" style="left:37px;top:87px;width:66px;overflow:hidden;color:#111">209</div>
<div class="t" style="left:111px;top:87px;width:81px;overflow:hidden;color:#111">Nábytok</div>
<div class="t" style="left:200px;top:80px;width:134px;overflow:hidden;color:#111">béžová stolička<br>učiteľská</div>
<div class="t" style="left:334px;width:47px;text-align:right;top:87px;color:#111">1</div>
<div class="t" style="left:396px;top:87px;width:86px;overflow:hidden;color:#111">K1</div>
<div class="t" style="left:482px;width:47px;text-align:right;top:87px;color:#111">2025</div>
<div class="t" style="left:544px;top:87px;width:116px;overflow:hidden;color:#111">Učiteľ 05</div>
<div class="t" style="left:660px;width:54px;text-align:right;top:87px;color:#111">97.00</div>
<div class="t" style="left:721px;width:62px;text-align:right;top:87px;color:#111">97.00</div>
<div class="t" style="left:798px;top:87px;width:115px;overflow:hidden;color:#111">21. 03. 2025</div>
<div class="t" style="left:1018px;top:87px;width:136px;overflow:hidden;color:#111">kúpa</div>
<div class="abs" style="left:0px;top:113px;width:1044px;height:34px;background:#ffffff"></div>
<div class="abs" style="left:0px;top:113px;width:1044px;height:1px;background:#cbe4fa"></div>
<svg class="abs" style="left:7px;top:123px" width="16" height="16" viewBox="0 0 16 16"><rect x="3.5" y="0.5" width="9" height="6" fill="#c4e8fc" stroke="#94abc2" stroke-width="1"/><rect x="7" y="6.5" width="2" height="1.5" fill="#94abc2"/><rect x="0.3" y="8" width="15.4" height="2" rx="0.5" fill="#e2b866"/><rect x="1.7" y="10" width="1.5" height="6" fill="#ebc274"/><rect x="12.8" y="10" width="1.5" height="6" fill="#ebc274"/><rect x="3.2" y="12" width="9.6" height="1.6" fill="rgba(140,130,110,0.22)"/></svg>
<div class="t" style="left:37px;top:124px;width:66px;overflow:hidden;color:#111">039</div>
<div class="t" style="left:111px;top:124px;width:81px;overflow:hidden;color:#111">Nábytok</div>
<div class="t" style="left:200px;top:124px;width:134px;overflow:hidden;color:#111">C stolička detská</div>
<div class="t" style="left:334px;width:47px;text-align:right;top:124px;color:#111">1</div>
<div class="t" style="left:396px;top:124px;width:86px;overflow:hidden;color:#111">K1</div>
<div class="t" style="left:482px;width:47px;text-align:right;top:124px;color:#111">2025</div>
<div class="t" style="left:544px;top:124px;width:116px;overflow:hidden;color:#111">Učiteľ 05</div>
<div class="t" style="left:660px;width:54px;text-align:right;top:124px;color:#111">50.00</div>
<div class="t" style="left:721px;width:62px;text-align:right;top:124px;color:#111">50.00</div>
<div class="t" style="left:798px;top:124px;width:115px;overflow:hidden;color:#111">04. 03. 2025</div>
<div class="t" style="left:1018px;top:124px;width:136px;overflow:hidden;color:#111">kúpa</div>
<div class="abs" style="left:0px;top:147px;width:1044px;height:34px;background:#fafafa"></div>
<div class="abs" style="left:0px;top:147px;width:1044px;height:1px;background:#cbe4fa"></div>
<svg class="abs" style="left:7px;top:157px" width="16" height="16" viewBox="0 0 16 16"><rect x="3.5" y="0.5" width="9" height="6" fill="#c4e8fc" stroke="#94abc2" stroke-width="1"/><rect x="7" y="6.5" width="2" height="1.5" fill="#94abc2"/><rect x="0.3" y="8" width="15.4" height="2" rx="0.5" fill="#e2b866"/><rect x="1.7" y="10" width="1.5" height="6" fill="#ebc274"/><rect x="12.8" y="10" width="1.5" height="6" fill="#ebc274"/><rect x="3.2" y="12" width="9.6" height="1.6" fill="rgba(140,130,110,0.22)"/></svg>
<div class="t" style="left:37px;top:158px;width:66px;overflow:hidden;color:#111">006</div>
<div class="t" style="left:111px;top:158px;width:81px;overflow:hidden;color:#111">Nábytok</div>
<div class="t" style="left:200px;top:158px;width:134px;overflow:hidden;color:#111">cecil stolička detská</div>
<div class="t" style="left:334px;width:47px;text-align:right;top:158px;color:#111">1</div>
<div class="t" style="left:396px;top:158px;width:86px;overflow:hidden;color:#111">K1</div>
<div class="t" style="left:482px;width:47px;text-align:right;top:158px;color:#111">2025</div>
<div class="t" style="left:544px;top:158px;width:116px;overflow:hidden;color:#111">Učiteľ 05</div>
<div class="t" style="left:660px;width:54px;text-align:right;top:158px;color:#111">50.00</div>
<div class="t" style="left:721px;width:62px;text-align:right;top:158px;color:#111">50.00</div>
<div class="t" style="left:798px;top:158px;width:115px;overflow:hidden;color:#111">04. 03. 2025</div>
<div class="t" style="left:1018px;top:158px;width:136px;overflow:hidden;color:#111">kúpa</div>
<div class="abs" style="left:0px;top:181px;width:1044px;height:34px;background:#ffffff"></div>
<div class="abs" style="left:0px;top:181px;width:1044px;height:1px;background:#cbe4fa"></div>
<svg class="abs" style="left:7px;top:191px" width="16" height="16" viewBox="0 0 16 16"><rect x="3.5" y="0.5" width="9" height="6" fill="#c4e8fc" stroke="#94abc2" stroke-width="1"/><rect x="7" y="6.5" width="2" height="1.5" fill="#94abc2"/><rect x="0.3" y="8" width="15.4" height="2" rx="0.5" fill="#e2b866"/><rect x="1.7" y="10" width="1.5" height="6" fill="#ebc274"/><rect x="12.8" y="10" width="1.5" height="6" fill="#ebc274"/><rect x="3.2" y="12" width="9.6" height="1.6" fill="rgba(140,130,110,0.22)"/></svg>
<div class="t" style="left:37px;top:192px;width:66px;overflow:hidden;color:#111">038</div>
<div class="t" style="left:111px;top:192px;width:81px;overflow:hidden;color:#111">Nábytok</div>
<div class="t" style="left:200px;top:192px;width:134px;overflow:hidden;color:#111">D stolička detská</div>
<div class="t" style="left:334px;width:47px;text-align:right;top:192px;color:#111">1</div>
<div class="t" style="left:396px;top:192px;width:86px;overflow:hidden;color:#111">K1</div>
<div class="t" style="left:482px;width:47px;text-align:right;top:192px;color:#111">2025</div>
<div class="t" style="left:544px;top:192px;width:116px;overflow:hidden;color:#111">Učiteľ 05</div>
<div class="t" style="left:660px;width:54px;text-align:right;top:192px;color:#111">50.00</div>
<div class="t" style="left:721px;width:62px;text-align:right;top:192px;color:#111">50.00</div>
<div class="t" style="left:798px;top:192px;width:115px;overflow:hidden;color:#111">04. 03. 2025</div>
<div class="t" style="left:1018px;top:192px;width:136px;overflow:hidden;color:#111">kúpa</div>
<div class="abs" style="left:0px;top:215px;width:1044px;height:39px;background:#fafafa"></div>
<div class="abs" style="left:0px;top:215px;width:1044px;height:1px;background:#cbe4fa"></div>
<svg class="abs" style="left:7px;top:228px" width="16" height="16" viewBox="0 0 16 16"><rect x="3.5" y="0.5" width="9" height="6" fill="#c4e8fc" stroke="#94abc2" stroke-width="1"/><rect x="7" y="6.5" width="2" height="1.5" fill="#94abc2"/><rect x="0.3" y="8" width="15.4" height="2" rx="0.5" fill="#e2b866"/><rect x="1.7" y="10" width="1.5" height="6" fill="#ebc274"/><rect x="12.8" y="10" width="1.5" height="6" fill="#ebc274"/><rect x="3.2" y="12" width="9.6" height="1.6" fill="rgba(140,130,110,0.22)"/></svg>
<div class="t" style="left:37px;top:228px;width:66px;overflow:hidden;color:#111">2025_001</div>
<div class="t" style="left:111px;top:228px;width:81px;overflow:hidden;color:#111">Nábytok</div>
<div class="t" style="left:200px;top:221px;width:134px;overflow:hidden;color:#111">drevená Stolička<br>vysoká</div>
<div class="t" style="left:334px;width:47px;text-align:right;top:228px;color:#111">100</div>
<div class="t" style="left:396px;top:228px;width:86px;overflow:hidden;color:#111">K7</div>
<div class="t" style="left:482px;width:47px;text-align:right;top:228px;color:#111">2025</div>
<div class="t" style="left:544px;top:228px;width:116px;overflow:hidden;color:#111">Učiteľ 07</div>
<div class="t" style="left:660px;width:54px;text-align:right;top:228px;color:#111">30.00</div>
<div class="t" style="left:721px;width:62px;text-align:right;top:228px;color:#111">3000.00</div>
<div class="t" style="left:798px;top:228px;width:115px;overflow:hidden;color:#111">18. 03. 2025</div>
<div class="t" style="left:1018px;top:228px;width:136px;overflow:hidden;color:#111">kúpa</div>
<div class="abs" style="left:0px;top:254px;width:1044px;height:34px;background:#ffffff"></div>
<div class="abs" style="left:0px;top:254px;width:1044px;height:1px;background:#cbe4fa"></div>
<svg class="abs" style="left:7px;top:264px" width="16" height="16" viewBox="0 0 16 16"><rect x="3.5" y="0.5" width="9" height="6" fill="#c4e8fc" stroke="#94abc2" stroke-width="1"/><rect x="7" y="6.5" width="2" height="1.5" fill="#94abc2"/><rect x="0.3" y="8" width="15.4" height="2" rx="0.5" fill="#e2b866"/><rect x="1.7" y="10" width="1.5" height="6" fill="#ebc274"/><rect x="12.8" y="10" width="1.5" height="6" fill="#ebc274"/><rect x="3.2" y="12" width="9.6" height="1.6" fill="rgba(140,130,110,0.22)"/></svg>
<div class="t" style="left:37px;top:265px;width:66px;overflow:hidden;color:#111">25</div>
<div class="t" style="left:111px;top:265px;width:81px;overflow:hidden;color:#111">Nábytok</div>
<div class="t" style="left:200px;top:265px;width:134px;overflow:hidden;color:#111">Havo Stolička detská</div>
<div class="t" style="left:334px;width:47px;text-align:right;top:265px;color:#111">21</div>
<div class="t" style="left:396px;top:265px;width:86px;overflow:hidden;color:#111">K3</div>
<div class="t" style="left:544px;top:265px;width:116px;overflow:hidden;color:#111">Učiteľ 03</div>
<div class="t" style="left:660px;width:54px;text-align:right;top:265px;color:#111">30.00</div>
<div class="t" style="left:721px;width:62px;text-align:right;top:265px;color:#111">630.00</div>
<div class="abs" style="left:0px;top:288px;width:1044px;height:39px;background:#fafafa"></div>
<div class="abs" style="left:0px;top:288px;width:1044px;height:1px;background:#cbe4fa"></div>
<svg class="abs" style="left:7px;top:301px" width="16" height="16" viewBox="0 0 16 16"><rect x="3.5" y="0.5" width="9" height="6" fill="#c4e8fc" stroke="#94abc2" stroke-width="1"/><rect x="7" y="6.5" width="2" height="1.5" fill="#94abc2"/><rect x="0.3" y="8" width="15.4" height="2" rx="0.5" fill="#e2b866"/><rect x="1.7" y="10" width="1.5" height="6" fill="#ebc274"/><rect x="12.8" y="10" width="1.5" height="6" fill="#ebc274"/><rect x="3.2" y="12" width="9.6" height="1.6" fill="rgba(140,130,110,0.22)"/></svg>
<div class="t" style="left:37px;top:301px;width:66px;overflow:hidden;color:#111">A003</div>
<div class="t" style="left:111px;top:301px;width:81px;overflow:hidden;color:#111">Nábytok</div>
<div class="t" style="left:200px;top:301px;width:134px;overflow:hidden;color:#111">polica drevená</div>
<div class="t" style="left:334px;width:47px;text-align:right;top:301px;color:#111">1</div>
<div class="t" style="left:396px;top:294px;width:86px;overflow:hidden;color:#111">Chemické<br>laboratórium</div>
<div class="t" style="left:482px;width:47px;text-align:right;top:301px;color:#111">2025</div>
<div class="t" style="left:544px;top:301px;width:116px;overflow:hidden;color:#111">Učiteľ 05</div>
<div class="t" style="left:798px;top:301px;width:115px;overflow:hidden;color:#111">01. 03. 2025</div>
<div class="t" style="left:1018px;top:301px;width:136px;overflow:hidden;color:#111">kúpa</div>
<div class="abs" style="left:0px;top:327px;width:1044px;height:39px;background:#ffffff"></div>
<div class="abs" style="left:0px;top:327px;width:1044px;height:1px;background:#cbe4fa"></div>
<svg class="abs" style="left:7px;top:340px" width="16" height="16" viewBox="0 0 16 16"><rect x="3.5" y="0.5" width="9" height="6" fill="#c4e8fc" stroke="#94abc2" stroke-width="1"/><rect x="7" y="6.5" width="2" height="1.5" fill="#94abc2"/><rect x="0.3" y="8" width="15.4" height="2" rx="0.5" fill="#e2b866"/><rect x="1.7" y="10" width="1.5" height="6" fill="#ebc274"/><rect x="12.8" y="10" width="1.5" height="6" fill="#ebc274"/><rect x="3.2" y="12" width="9.6" height="1.6" fill="rgba(140,130,110,0.22)"/></svg>
<div class="t" style="left:37px;top:340px;width:66px;overflow:hidden;color:#111">25103005</div>
<div class="t" style="left:111px;top:340px;width:81px;overflow:hidden;color:#111">Nábytok</div>
<div class="t" style="left:200px;top:340px;width:134px;overflow:hidden;color:#111">polica vysoká</div>
<div class="t" style="left:334px;width:47px;text-align:right;top:340px;color:#111">1</div>
<div class="t" style="left:396px;top:333px;width:86px;overflow:hidden;color:#111">Chemické<br>laboratórium</div>
<div class="t" style="left:482px;width:47px;text-align:right;top:340px;color:#111">2025</div>
<div class="t" style="left:544px;top:340px;width:116px;overflow:hidden;color:#111">Učiteľ 05</div>
<div class="t" style="left:798px;top:340px;width:115px;overflow:hidden;color:#111">01. 03. 2025</div>
<div class="t" style="left:1018px;top:340px;width:136px;overflow:hidden;color:#111">kúpa</div>
<div class="abs" style="left:0px;top:366px;width:1044px;height:39px;background:#fafafa"></div>
<div class="abs" style="left:0px;top:366px;width:1044px;height:1px;background:#cbe4fa"></div>
<svg class="abs" style="left:7px;top:379px" width="16" height="16" viewBox="0 0 16 16"><rect x="3.5" y="0.5" width="9" height="6" fill="#c4e8fc" stroke="#94abc2" stroke-width="1"/><rect x="7" y="6.5" width="2" height="1.5" fill="#94abc2"/><rect x="0.3" y="8" width="15.4" height="2" rx="0.5" fill="#e2b866"/><rect x="1.7" y="10" width="1.5" height="6" fill="#ebc274"/><rect x="12.8" y="10" width="1.5" height="6" fill="#ebc274"/><rect x="3.2" y="12" width="9.6" height="1.6" fill="rgba(140,130,110,0.22)"/></svg>
<div class="t" style="left:37px;top:379px;width:66px;overflow:hidden;color:#111">A0022</div>
<div class="t" style="left:111px;top:379px;width:81px;overflow:hidden;color:#111">Nábytok</div>
<div class="t" style="left:200px;top:379px;width:134px;overflow:hidden;color:#111">skriňa drevená</div>
<div class="t" style="left:334px;width:47px;text-align:right;top:379px;color:#111">1</div>
<div class="t" style="left:396px;top:372px;width:86px;overflow:hidden;color:#111">Chemické<br>laboratórium</div>
<div class="t" style="left:482px;width:47px;text-align:right;top:379px;color:#111">2024</div>
<div class="t" style="left:544px;top:379px;width:116px;overflow:hidden;color:#111">Učiteľ 05</div>
<div class="t" style="left:798px;top:379px;width:115px;overflow:hidden;color:#111">05. 05. 2024</div>
<div class="t" style="left:1018px;top:379px;width:136px;overflow:hidden;color:#111">kúpa</div>
<div class="abs" style="left:0px;top:405px;width:1044px;height:39px;background:#ffffff"></div>
<div class="abs" style="left:0px;top:405px;width:1044px;height:1px;background:#cbe4fa"></div>
<svg class="abs" style="left:7px;top:418px" width="16" height="16" viewBox="0 0 16 16"><rect x="3.5" y="0.5" width="9" height="6" fill="#c4e8fc" stroke="#94abc2" stroke-width="1"/><rect x="7" y="6.5" width="2" height="1.5" fill="#94abc2"/><rect x="0.3" y="8" width="15.4" height="2" rx="0.5" fill="#e2b866"/><rect x="1.7" y="10" width="1.5" height="6" fill="#ebc274"/><rect x="12.8" y="10" width="1.5" height="6" fill="#ebc274"/><rect x="3.2" y="12" width="9.6" height="1.6" fill="rgba(140,130,110,0.22)"/></svg>
<div class="t" style="left:37px;top:418px;width:66px;overflow:hidden;color:#111">321654GGC</div>
<div class="t" style="left:111px;top:418px;width:81px;overflow:hidden;color:#111">Nábytok</div>
<div class="t" style="left:200px;top:411px;width:134px;overflow:hidden;color:#111">SKRIŇA DVEROVÁ,<br>DVE POLICE</div>
<div class="t" style="left:334px;width:47px;text-align:right;top:418px;color:#111">1</div>
<div class="t" style="left:396px;top:411px;width:86px;overflow:hidden;color:#111">Chemické<br>laboratórium</div>
<div class="t" style="left:482px;width:47px;text-align:right;top:418px;color:#111">2025</div>
<div class="t" style="left:544px;top:418px;width:116px;overflow:hidden;color:#111">Učiteľ 05</div>
<div class="t" style="left:798px;top:418px;width:115px;overflow:hidden;color:#111">01. 03. 2025</div>
<div class="t" style="left:1018px;top:418px;width:136px;overflow:hidden;color:#111">kúpa</div>
<div class="abs" style="left:0px;top:444px;width:1044px;height:39px;background:#fafafa"></div>
<div class="abs" style="left:0px;top:444px;width:1044px;height:1px;background:#cbe4fa"></div>
<svg class="abs" style="left:7px;top:457px" width="16" height="16" viewBox="0 0 16 16"><rect x="3.5" y="0.5" width="9" height="6" fill="#c4e8fc" stroke="#94abc2" stroke-width="1"/><rect x="7" y="6.5" width="2" height="1.5" fill="#94abc2"/><rect x="0.3" y="8" width="15.4" height="2" rx="0.5" fill="#e2b866"/><rect x="1.7" y="10" width="1.5" height="6" fill="#ebc274"/><rect x="12.8" y="10" width="1.5" height="6" fill="#ebc274"/><rect x="3.2" y="12" width="9.6" height="1.6" fill="rgba(140,130,110,0.22)"/></svg>
<div class="t" style="left:37px;top:457px;width:66px;overflow:hidden;color:#111">204</div>
<div class="t" style="left:111px;top:457px;width:81px;overflow:hidden;color:#111">Nábytok</div>
<div class="t" style="left:200px;top:457px;width:134px;overflow:hidden;color:#111">skriňa kovová</div>
<div class="t" style="left:334px;width:47px;text-align:right;top:457px;color:#111">1</div>
<div class="t" style="left:396px;top:450px;width:86px;overflow:hidden;color:#111">Chemické<br>laboratórium</div>
<div class="t" style="left:482px;width:47px;text-align:right;top:457px;color:#111">2025</div>
<div class="t" style="left:544px;top:457px;width:116px;overflow:hidden;color:#111">Učiteľ 05</div>
<div class="t" style="left:798px;top:457px;width:115px;overflow:hidden;color:#111">01. 03. 2025</div>
<div class="t" style="left:1018px;top:457px;width:136px;overflow:hidden;color:#111">kúpa</div>
<div class="abs" style="left:0px;top:483px;width:1044px;height:39px;background:#ffffff"></div>
<div class="abs" style="left:0px;top:483px;width:1044px;height:1px;background:#cbe4fa"></div>
<svg class="abs" style="left:7px;top:496px" width="16" height="16" viewBox="0 0 16 16"><rect x="3.5" y="0.5" width="9" height="6" fill="#c4e8fc" stroke="#94abc2" stroke-width="1"/><rect x="7" y="6.5" width="2" height="1.5" fill="#94abc2"/><rect x="0.3" y="8" width="15.4" height="2" rx="0.5" fill="#e2b866"/><rect x="1.7" y="10" width="1.5" height="6" fill="#ebc274"/><rect x="12.8" y="10" width="1.5" height="6" fill="#ebc274"/><rect x="3.2" y="12" width="9.6" height="1.6" fill="rgba(140,130,110,0.22)"/></svg>
<div class="t" style="left:37px;top:496px;width:66px;overflow:hidden;color:#111">208</div>
<div class="t" style="left:111px;top:496px;width:81px;overflow:hidden;color:#111">Nábytok</div>
<div class="t" style="left:200px;top:496px;width:134px;overflow:hidden;color:#111">skriňa kovová</div>
<div class="t" style="left:334px;width:47px;text-align:right;top:496px;color:#111">1</div>
<div class="t" style="left:396px;top:489px;width:86px;overflow:hidden;color:#111">Chemické<br>laboratórium</div>
<div class="t" style="left:482px;width:47px;text-align:right;top:496px;color:#111">2025</div>
<div class="t" style="left:544px;top:496px;width:116px;overflow:hidden;color:#111">Učiteľ 05</div>
<div class="t" style="left:798px;top:496px;width:115px;overflow:hidden;color:#111">01. 03. 2025</div>
<div class="t" style="left:1018px;top:496px;width:136px;overflow:hidden;color:#111">kúpa</div>
<div class="abs" style="left:0px;top:522px;width:1044px;height:39px;background:#fafafa"></div>
<div class="abs" style="left:0px;top:522px;width:1044px;height:1px;background:#cbe4fa"></div>
<svg class="abs" style="left:7px;top:535px" width="16" height="16" viewBox="0 0 16 16"><rect x="3.5" y="0.5" width="9" height="6" fill="#c4e8fc" stroke="#94abc2" stroke-width="1"/><rect x="7" y="6.5" width="2" height="1.5" fill="#94abc2"/><rect x="0.3" y="8" width="15.4" height="2" rx="0.5" fill="#e2b866"/><rect x="1.7" y="10" width="1.5" height="6" fill="#ebc274"/><rect x="12.8" y="10" width="1.5" height="6" fill="#ebc274"/><rect x="3.2" y="12" width="9.6" height="1.6" fill="rgba(140,130,110,0.22)"/></svg>
<div class="t" style="left:37px;top:535px;width:66px;overflow:hidden;color:#111">25103003</div>
<div class="t" style="left:111px;top:535px;width:81px;overflow:hidden;color:#111">Nábytok</div>
<div class="t" style="left:200px;top:535px;width:134px;overflow:hidden;color:#111">skriňa kovová</div>
<div class="t" style="left:334px;width:47px;text-align:right;top:535px;color:#111">1</div>
<div class="t" style="left:396px;top:528px;width:86px;overflow:hidden;color:#111">Chemické<br>laboratórium</div>
<div class="t" style="left:482px;width:47px;text-align:right;top:535px;color:#111">2025</div>
<div class="t" style="left:544px;top:535px;width:116px;overflow:hidden;color:#111">Učiteľ 05</div>
<div class="t" style="left:798px;top:535px;width:115px;overflow:hidden;color:#111">01. 03. 2025</div>
<div class="t" style="left:1018px;top:535px;width:136px;overflow:hidden;color:#111">kúpa</div>
<div class="abs" style="left:0px;top:561px;width:1044px;height:39px;background:#ffffff"></div>
<div class="abs" style="left:0px;top:561px;width:1044px;height:1px;background:#cbe4fa"></div>
<svg class="abs" style="left:7px;top:574px" width="16" height="16" viewBox="0 0 16 16"><rect x="3.5" y="0.5" width="9" height="6" fill="#c4e8fc" stroke="#94abc2" stroke-width="1"/><rect x="7" y="6.5" width="2" height="1.5" fill="#94abc2"/><rect x="0.3" y="8" width="15.4" height="2" rx="0.5" fill="#e2b866"/><rect x="1.7" y="10" width="1.5" height="6" fill="#ebc274"/><rect x="12.8" y="10" width="1.5" height="6" fill="#ebc274"/><rect x="3.2" y="12" width="9.6" height="1.6" fill="rgba(140,130,110,0.22)"/></svg>
<div class="t" style="left:37px;top:574px;width:66px;overflow:hidden;color:#111">25103004</div>
<div class="t" style="left:111px;top:574px;width:81px;overflow:hidden;color:#111">Nábytok</div>
<div class="t" style="left:200px;top:574px;width:134px;overflow:hidden;color:#111">skriňa kovová</div>
<div class="t" style="left:334px;width:47px;text-align:right;top:574px;color:#111">1</div>
<div class="t" style="left:396px;top:567px;width:86px;overflow:hidden;color:#111">Chemické<br>laboratórium</div>
<div class="t" style="left:482px;width:47px;text-align:right;top:574px;color:#111">2025</div>
<div class="t" style="left:544px;top:574px;width:116px;overflow:hidden;color:#111">Učiteľ 05</div>
<div class="t" style="left:798px;top:574px;width:115px;overflow:hidden;color:#111">01. 03. 2025</div>
<div class="t" style="left:1018px;top:574px;width:136px;overflow:hidden;color:#111">kúpa</div>
<div class="abs" style="left:29px;top:0px;width:1px;height:600px;background:#cbe4fa"></div>
<div class="abs" style="left:103px;top:0px;width:1px;height:600px;background:#cbe4fa"></div>
<div class="abs" style="left:192px;top:0px;width:1px;height:600px;background:#cbe4fa"></div>
<div class="abs" style="left:334px;top:0px;width:1px;height:600px;background:#cbe4fa"></div>
<div class="abs" style="left:388px;top:0px;width:1px;height:600px;background:#cbe4fa"></div>
<div class="abs" style="left:482px;top:0px;width:1px;height:600px;background:#cbe4fa"></div>
<div class="abs" style="left:536px;top:0px;width:1px;height:600px;background:#cbe4fa"></div>
<div class="abs" style="left:660px;top:0px;width:1px;height:600px;background:#cbe4fa"></div>
<div class="abs" style="left:721px;top:0px;width:1px;height:600px;background:#cbe4fa"></div>
<div class="abs" style="left:790px;top:0px;width:1px;height:600px;background:#cbe4fa"></div>
<div class="abs" style="left:913px;top:0px;width:1px;height:600px;background:#cbe4fa"></div>
<div class="abs" style="left:1010px;top:0px;width:1px;height:600px;background:#cbe4fa"></div>
</div>
<div class="abs" style="left:641px;top:203px;width:184px;height:231px;background:#fff;border:1px solid #d8d8d8;box-shadow:3px 3px 8px rgba(0,0,0,0.32)"></div>
<svg class="abs" style="left:647px;top:219px" width="9" height="10" viewBox="0 0 9 10"><path d="M0.8 5.5L3.2 9L8.5 0.8" fill="none" stroke="#222" stroke-width="1.3"/></svg>
<div class="t" style="left:659px;top:217px;color:#333">Zobraziť všetko</div>
<div class="abs" style="left:642px;top:240px;width:182px;height:1px;background:#c9dbec"></div>
<div class="t" style="left:659px;top:249.5px;color:#333">Chemické laboratórium (22)</div>
<div class="t" style="left:659px;top:275.5px;color:#333">K1 (35)</div>
<div class="t" style="left:659px;top:301.5px;color:#333">K2 (6)</div>
<div class="t" style="left:659px;top:327.5px;color:#333">K3 (5)</div>
<div class="t" style="left:659px;top:353.5px;color:#333">K5 (1)</div>
<div class="t" style="left:659px;top:379.5px;color:#333">K7 (35)</div>
<div class="t" style="left:659px;top:405.5px;color:#333">Telocvičňa (1)</div>
<div class="abs" style="left:629px;top:179px;width:92px;height:34px;border:4px solid #f00"></div>
<div class="abs" style="left:1284px;top:213px;width:14px;height:586px;background:#fbfbfb"></div>
<div class="abs" style="left:240px;top:785px;width:1058px;height:14px;background:#fbfbfb"></div>
<svg class="abs" style="left:1287px;top:218px" width="9" height="7"><path d="M0 6.5H9L4.5 0Z" fill="#8a8a8a"/></svg>
<div class="abs" style="left:1287px;top:249px;width:9px;height:80px;background:#8a8a8a;border-radius:4.5px"></div>
<svg class="abs" style="left:1287px;top:774px" width="9" height="7"><path d="M0 0H9L4.5 6.5Z" fill="#8a8a8a"/></svg>
<svg class="abs" style="left:244px;top:788px" width="8" height="9"><path d="M7.5 0V9L0 4.5Z" fill="#8a8a8a"/></svg>
<div class="abs" style="left:258px;top:788px;width:916px;height:9px;background:#8a8a8a;border-radius:4.5px"></div>
<svg class="abs" style="left:1272px;top:788px" width="8" height="9"><path d="M0 0V9L7.5 4.5Z" fill="#8a8a8a"/></svg>
</div></body></html>
